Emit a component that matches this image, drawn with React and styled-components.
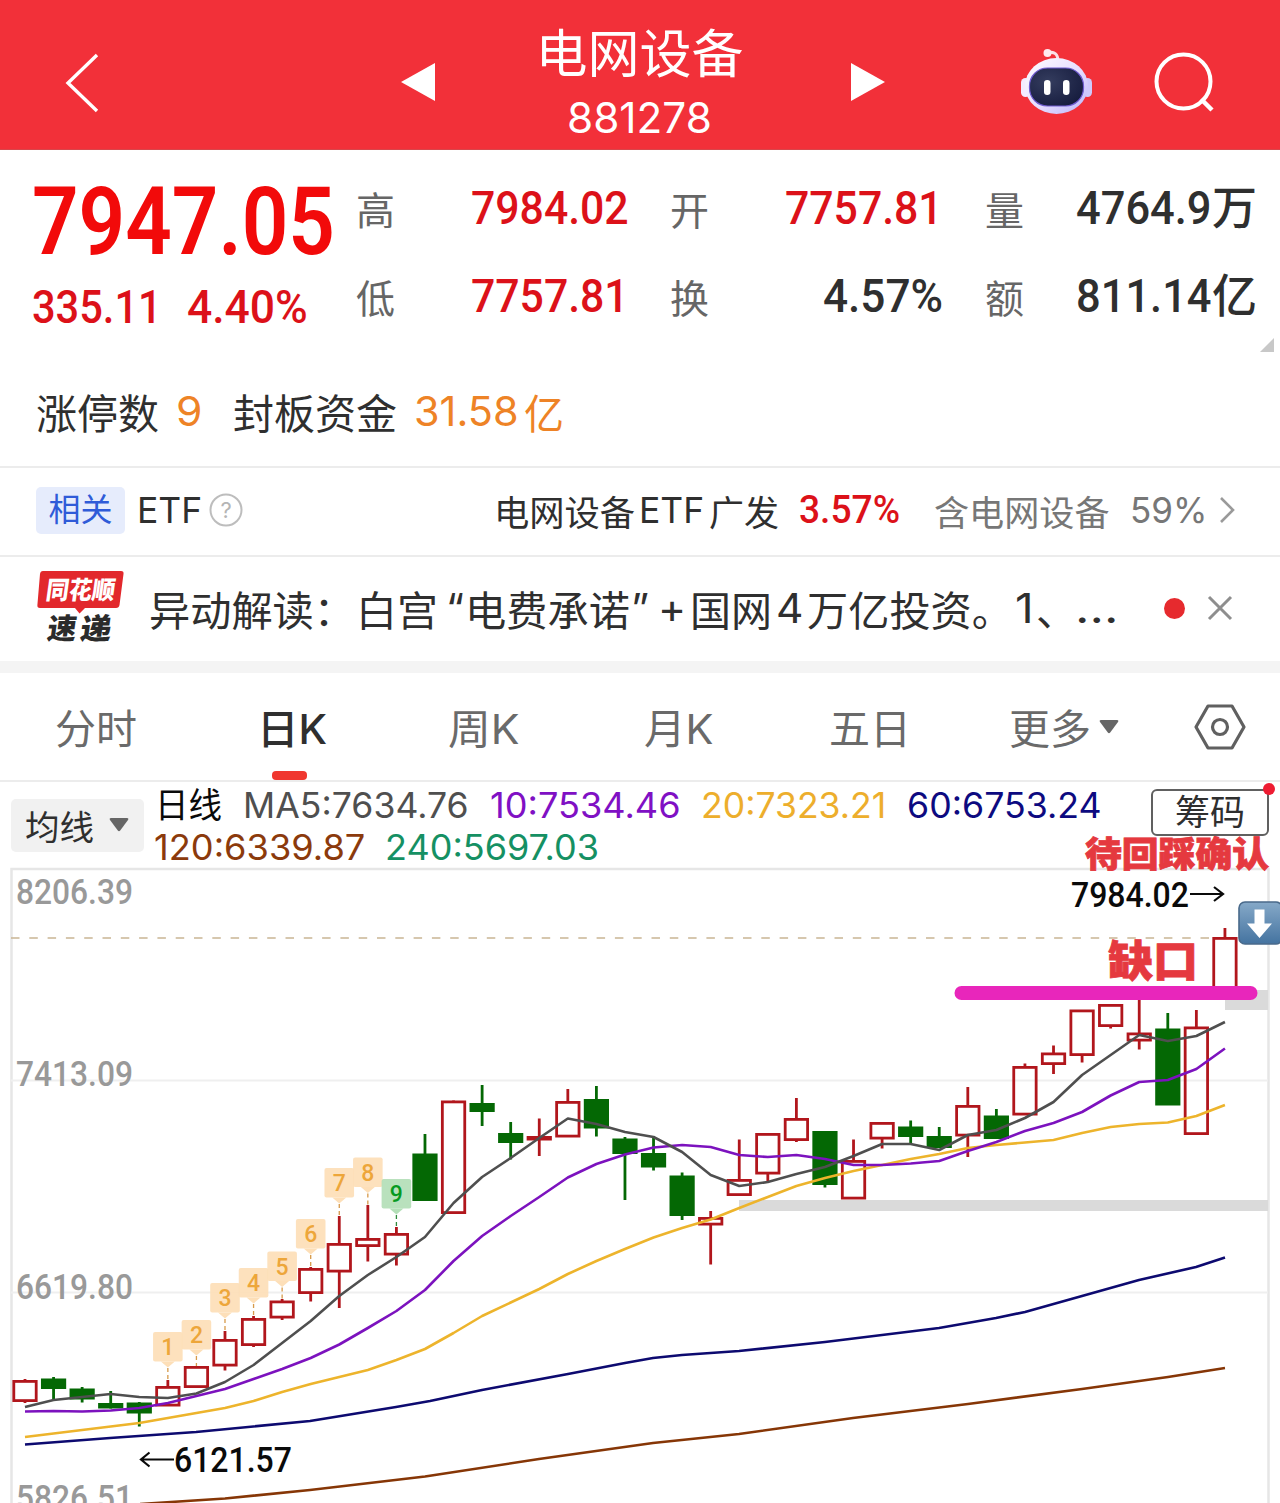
import React, { useLayoutEffect, useRef, useState } from "react";
import styled, { createGlobalStyle } from "styled-components";

const UI = `Inter, "Noto Sans CJK SC", sans-serif`;
const NUM = `Roboto, "Noto Sans CJK SC", sans-serif`;

const GlobalStyle = createGlobalStyle`
  * {
    box-sizing: border-box;
  }
  body {
    margin: 0;
    background: #fff;
    color: #2f2f2f;
    font-family: ${UI};
    overflow: hidden;
  }
`;

/* squeezes or stretches its text to a fixed width */
function FitText({ width, children, ...rest }) {
  const ref = useRef(null);
  const [scale, setScale] = useState(1);

  useLayoutEffect(() => {
    setScale(width / ref.current.offsetWidth);
  }, [width, children]);

  return (
    <FitBox $width={width} {...rest}>
      <span ref={ref} style={{ transform: `scaleX(${scale})` }}>
        {children}
      </span>
    </FitBox>
  );
}

const FitBox = styled.span`
  display: block;
  flex: none;
  width: ${(p) => p.$width}px;
  margin-left: ${(p) => p.$ml || 0}px;
  color: ${(p) => p.$color || "inherit"};
  white-space: pre;
  span {
    display: inline-block;
    transform-origin: left center;
  }
`;

const Screen = styled.div`
  width: 1280px;
  height: 1503px;
  overflow: hidden;
`;

const Header = styled.header`
  height: 150px;
  display: flex;
  align-items: center;
  background: #f23039;
  border-bottom: 1px solid #d8464b;
  color: #fff;
`;

const HeaderTitle = styled.div`
  width: 416px;
  height: 150px;
  padding: 23px 7px 0 0;
  display: flex;
  flex-direction: column;
  align-items: center;
`;

const Name = styled.div`
  font-size: 52px;
  line-height: 64px;
`;

const Code = styled.div`
  font-size: 42px;
  line-height: 62px;
`;

const Icon = styled.svg`
  display: block;
  flex: none;
  margin-left: ${(p) => p.$ml || 0}px;
  margin-top: ${(p) => p.$mt || 0}px;
`;

const Quote = styled.section`
  height: 212px;
  padding: 16px 0 0 32px;
  display: flex;
  position: relative;
`;

const PriceBlock = styled.div`
  width: 324px;
  color: #f20a0a;
  font-family: ${NUM};
  font-weight: 500;
`;

const Price = styled.div`
  font-size: 94px;
  font-weight: 600;
  line-height: 112px;
`;

const Change = styled.div`
  display: flex;
  font-size: 47px;
  line-height: 58px;
  color: #dc1119;
`;

const Stats = styled.div`
  display: grid;
  grid-template-columns: 314px 315px 280px;
  grid-auto-rows: 88px;
`;

const Stat = styled.div`
  display: flex;
  align-items: center;
  justify-content: space-between;
  width: ${(p) => p.$width}px;
  height: 88px;
`;

const StatLabel = styled.span`
  margin-top: 2px;
  font-size: 39px;
  line-height: 60px;
  color: #666;
`;

const StatValue = styled.div`
  display: flex;
  font-family: ${NUM};
  font-weight: 500;
  font-size: 46px;
  line-height: 60px;
  margin-top: -4px;
  color: ${(p) => (p.$up ? "#dc1119" : "#2f2f2f")};
`;

const Corner = styled.svg`
  position: absolute;
  right: 6px;
  top: 188px;
`;

const LimitRow = styled.section`
  height: 104px;
  padding: 0 0 6px 36px;
  display: flex;
  align-items: center;
  font-size: 41px;
`;

const EtfRow = styled.section`
  height: 89px;
  padding: 0 0 3px 36px;
  display: flex;
  align-items: center;
  border-top: 2px solid #ececec;
  font-size: 35.5px;
`;

const Tag = styled.span`
  width: 89px;
  height: 47px;
  border-radius: 5px;
  background: #e6ecfc;
  color: #2f5bd8;
  font-size: 32px;
  line-height: 46px;
  text-align: center;
`;

const Percent = styled.div`
  margin-left: 20px;
  font-family: ${NUM};
  font-weight: 500;
  font-size: 39px;
  color: #dc1119;
`;

const NewsRow = styled.section`
  height: 106px;
  padding: 0 0 2px 36px;
  display: flex;
  align-items: center;
  border-top: 2px solid #ececec;
  font-size: 41px;
`;

const Dot = styled.i`
  width: 21px;
  height: 21px;
  margin-left: ${(p) => p.$ml}px;
  border-radius: 50%;
  background: #e62a2e;
`;

const Divider = styled.div`
  height: 12px;
  background: #f4f4f4;
`;

const Tabs = styled.nav`
  height: 109px;
  display: flex;
  align-items: center;
  border-bottom: 2px solid #ececec;
`;

const Tab = styled.div`
  position: relative;
  height: 107px;
  line-height: 112px;
  margin-left: ${(p) => p.$ml}px;
  font-size: 41px;
  color: ${(p) => (p.$active ? "#2f2f2f" : "#6a6a6a")};
  font-weight: ${(p) => (p.$active ? 500 : 400)};
  &::after {
    content: "";
    display: ${(p) => (p.$active ? "block" : "none")};
    position: absolute;
    left: 15px;
    bottom: 0;
    width: 35px;
    height: 9px;
    border-radius: 4px;
    background: #f0372f;
  }
`;

const Legend = styled.section`
  height: 87px;
  display: flex;
  align-items: flex-start;
  font-size: 35px;
`;

const MaSelect = styled.div`
  width: 133px;
  height: 53px;
  margin: 17px 0 0 11px;
  padding: 0 0 2px 14px;
  display: flex;
  align-items: center;
  border-radius: 5px;
  background: #f1f1f1;
  font-size: 34.5px;
`;

const MaLines = styled.div`
  width: 1007px;
  padding: 2px 0 0 11px;
`;

const MaLine = styled.div`
  display: flex;
  height: 42px;
  line-height: 42px;
`;

const ChipButton = styled.div`
  position: relative;
  width: 118px;
  height: 47px;
  margin-top: 7px;
  border: 2px solid #606060;
  border-radius: 6px;
  font-size: 35px;
  line-height: 42px;
  text-align: center;
  &::after {
    content: "";
    position: absolute;
    right: -8px;
    top: -8px;
    width: 12px;
    height: 12px;
    border-radius: 50%;
    background: #ee1c32;
  }
`;

const ChartSvg = styled.svg`
  display: block;
  overflow: visible;
`;

const RED = "#b1161c";
const GREEN = "#046804";
const STEP = 28.57;
const cx = (i) => 25 + i * STEP;

// [up, body top, body bottom, wick top, wick bottom]
const candles = [
  [1, 1380, 1402, 1379, 1403],
  [0, 1378.5, 1389, 1377, 1399.5],
  [0, 1388.5, 1399.5, 1387, 1402.5],
  [0, 1403, 1408.5, 1391, 1408.5],
  [0, 1402.5, 1413.5, 1402, 1426.5],
  [1, 1386, 1406.5, 1380, 1406],
  [1, 1366, 1388, 1366, 1388],
  [1, 1339, 1366.5, 1331, 1370.5],
  [1, 1318, 1346, 1316, 1347],
  [1, 1300.5, 1318.5, 1299, 1320],
  [1, 1268, 1294, 1267, 1301.5],
  [1, 1243, 1272.5, 1216, 1308],
  [1, 1238, 1247, 1205, 1261.5],
  [1, 1233, 1255.5, 1227, 1265.5],
  [0, 1153.5, 1201, 1134, 1201],
  [1, 1100.5, 1214, 1100.5, 1214],
  [0, 1103, 1112, 1085, 1126],
  [0, 1133, 1143, 1122, 1159.5],
  [1, 1136, 1140.5, 1118.5, 1156],
  [1, 1101, 1137.5, 1089, 1137],
  [0, 1099, 1128.5, 1086, 1136.5],
  [0, 1138.5, 1154, 1137, 1200],
  [0, 1153, 1167.5, 1136, 1170.5],
  [0, 1175.5, 1216, 1172.5, 1220],
  [1, 1217, 1225.5, 1211, 1264.5],
  [1, 1179, 1196, 1139.5, 1196],
  [1, 1133, 1174.5, 1133, 1182.5],
  [1, 1118, 1141, 1098, 1142],
  [0, 1131, 1185, 1131, 1187.5],
  [1, 1160, 1199.5, 1139.5, 1199],
  [1, 1122, 1139.5, 1122, 1148.5],
  [0, 1126.5, 1137, 1120.5, 1143.5],
  [0, 1136, 1148, 1127, 1148],
  [1, 1105, 1136.5, 1087, 1157],
  [0, 1115.5, 1139, 1109, 1139],
  [1, 1066, 1115.5, 1063.5, 1115],
  [1, 1052.5, 1065, 1045.5, 1074],
  [1, 1009.5, 1056, 1010, 1062.5],
  [1, 1004, 1027, 1004, 1028.5],
  [1, 1032.5, 1041.5, 998, 1049.5],
  [0, 1028.5, 1105.5, 1013, 1105],
  [1, 1026.5, 1135, 1010, 1135],
  [1, 937, 994, 928, 994],
];

const ma5 = [
  1407, 1400, 1397, 1394, 1397, 1398, 1393.5, 1382, 1365, 1343, 1321, 1296,
  1275, 1257, 1237, 1203, 1177, 1158, 1138, 1118.5, 1124, 1132, 1137, 1152,
  1175, 1186, 1182, 1174, 1167, 1156, 1144, 1144, 1150, 1135, 1130, 1118, 1102,
  1075, 1055, 1035, 1041, 1036, 1022,
];

const ma10 = [
  1411.5, 1411, 1411.5, 1410.5, 1408, 1403, 1396, 1389, 1379, 1369, 1358,
  1344.5, 1328, 1311, 1290, 1261, 1236, 1216, 1197, 1177.5, 1164, 1154.5, 1147.5,
  1145, 1147, 1155, 1157, 1155, 1159, 1165, 1165, 1163.5, 1161, 1151, 1142,
  1131, 1123, 1112, 1095.5, 1082, 1080, 1069, 1048.5,
];

const ma20 = [
  1437, 1433.5, 1430, 1426.5, 1423, 1418, 1413, 1408, 1401, 1392, 1384, 1377,
  1370, 1360, 1349, 1333, 1316, 1302.5, 1289, 1274, 1261, 1249, 1237.5, 1228,
  1219.5, 1208, 1197, 1186, 1178, 1171, 1165, 1159, 1154, 1148, 1145, 1142.5,
  1140, 1133, 1127, 1124, 1122.5, 1116, 1105,
];

const ma60 =
  "25,1444.5 110,1438 196,1432 310,1421 396,1407 430,1401 482,1390 568,1374 625,1363 653,1358 682,1355 739,1351 825,1342 939,1328 996,1318 1025,1312 1082,1296 1139,1280 1196,1267 1225,1257.5";
const ma120 =
  "140,1504 225,1498.5 310,1490 425,1476.5 539,1459 653,1443 739,1434 853,1418 968,1404 1082,1389 1168,1377 1225,1368";

// [candle index, badge top]
const badges = [
  [5, 1332],
  [6, 1320],
  [7, 1283],
  [8, 1268],
  [9, 1251.5],
  [10, 1219],
  [11, 1168],
  [12, 1157.5],
  [13, 1179],
];

const axis = [
  ["8206.39", 903.5],
  ["7413.09", 1086],
  ["6619.80", 1298.5],
  ["5826.51", 1510],
];

const toPoints = (ys) => ys.map((y, i) => `${cx(i)},${y}`).join(" ");

function Candle({ index, data }) {
  const [up, top, bottom, high, low] = data;
  const x = cx(index);
  const color = up ? RED : GREEN;
  return (
    <g stroke={color} strokeWidth="2.8">
      <path d={`M${x} ${high}V${top + 1}M${x} ${bottom - 1}V${low}`} />
      {up ? (
        <rect
          x={x - 11.2}
          y={top + 1.4}
          width="22.4"
          height={bottom - top - 2.8}
          fill="none"
        />
      ) : (
        <rect x={x - 12.6} y={top} width="25.2" height={bottom - top} fill={GREEN} stroke="none" />
      )}
    </g>
  );
}

function Badge({ index, top, label }) {
  const x = cx(index);
  const last = label === 9;
  const bg = last ? "#b4dfb8" : "#fddfb8";
  const fg = last ? "#079a22" : "#eda63a";
  return (
    <g>
      <path
        d={`M${x} ${top + 36}V${candles[index][3]}`}
        stroke={last ? "#2f8a3c" : "#d69a4a"}
        strokeWidth="1.3"
        strokeDasharray="4 3"
      />
      <rect x={x - 14.8} y={top} width="29.6" height="29.5" rx="2" fill={bg} opacity="0.93" />
      <path d={`M${x - 7} ${top + 29.5}h14l-7 6z`} fill={bg} />
      <text
        x={x}
        y={top + 23}
        textAnchor="middle"
        fontFamily="Roboto"
        fontWeight="500"
        fontSize="23"
        fill={fg}
      >
        {label}
      </text>
    </g>
  );
}

function Chart() {
  return (
    <ChartSvg width="1280" height="634" viewBox="0 869 1280 634" fill="none">
      <g stroke="#e6e6e6" strokeWidth="2">
        <path d="M11.5 1503V869H1268.5V1503" strokeWidth="2.5" />
        <path d="M11 1080.5H1268M11 1292.5H1268" stroke="#efefef" />
      </g>
      <path d="M739 1205.5H1268" stroke="#dadada" strokeWidth="11" />
      <path d="M1225 1000H1268" stroke="#dadada" strokeWidth="20" />
      <path d="M11 938H1213" stroke="#c9b594" strokeWidth="1.6" strokeDasharray="8.5 9.8" />

      <g fontFamily="Roboto" fontSize="35" fontWeight="500" fill="#999">
        {axis.map(([label, y]) => (
          <text key={label} x="16" y={y} textLength="117" lengthAdjust="spacingAndGlyphs">
            {label}
          </text>
        ))}
      </g>

      {badges.map(([i, top], n) => (
        <Badge key={i} index={i} top={top} label={n + 1} />
      ))}
      {candles.map((c, i) => (
        <Candle key={i} index={i} data={c} />
      ))}

      <g strokeWidth="2.6" strokeLinejoin="round">
        <polyline points={ma120} stroke="#863606" />
        <polyline points={ma60} stroke="#0d0a70" />
        <polyline points={toPoints(ma20)} stroke="#edb42c" />
        <polyline points={toPoints(ma10)} stroke="#7c12be" />
        <polyline points={toPoints(ma5)} stroke="#4f4f4f" />
      </g>

      <g fontFamily="Roboto" fontSize="35" fontWeight="500" fill="#0a0a0a">
        <text x="1071" y="907" textLength="118" lengthAdjust="spacingAndGlyphs">
          7984.02
        </text>
        <text x="174" y="1472" textLength="118" lengthAdjust="spacingAndGlyphs">
          6121.57
        </text>
      </g>
      <g stroke="#0a0a0a" strokeWidth="2.2">
        <path d="M1190 894H1223M1214 887L1223 894L1214 901" />
        <path d="M174 1459.5H141M149.5 1452.5L141 1459.5L149.5 1466.5" />
      </g>

      <path d="M961.5 993H1250.5" stroke="#e826bb" strokeWidth="14" strokeLinecap="round" />
      <g
        fontFamily="Noto Sans CJK SC"
        fontWeight="900"
        fill="#e5393f"
        stroke="#e5393f"
        strokeWidth="0.8"
      >
        <text x="1085" y="867" fontSize="35" textLength="184" lengthAdjust="spacingAndGlyphs">
          待回踩确认
        </text>
        <text x="1108" y="977" fontSize="43" textLength="90" lengthAdjust="spacingAndGlyphs">
          缺口
        </text>
      </g>

      <defs>
        <linearGradient id="arrow-bg" x1="0" y1="0" x2="0" y2="1">
          <stop offset="0" stopColor="#86a9c8" />
          <stop offset="1" stopColor="#4473a0" />
        </linearGradient>
      </defs>
      <rect x="1239" y="902" width="43" height="42" rx="6" fill="url(#arrow-bg)" stroke="#496a8b" strokeWidth="1.6" />
      <path d="M1254.5 909.5h10v14h7.5l-12.5 14.5l-12.5-14.5h7.5z" fill="#fff" />
    </ChartSvg>
  );
}

function Robot() {
  return (
    <Icon width="74" height="68" viewBox="0 0 74 68" $ml={135} $mt={13}>
      <defs>
        <linearGradient id="shell" x1="0" y1="0" x2="1" y2="1">
          <stop offset="0" stopColor="#fff" />
          <stop offset="0.55" stopColor="#e6dcff" />
          <stop offset="1" stopColor="#b9b5fa" />
        </linearGradient>
        <radialGradient id="visor" cx="0.35" cy="0.35" r="0.8">
          <stop offset="0" stopColor="#343c5e" />
          <stop offset="1" stopColor="#141a3c" />
        </radialGradient>
      </defs>
      <path d="M28 6C34 4 38 7 38 14" fill="none" stroke="#fbdfe6" strokeWidth="3" />
      <circle cx="27.5" cy="6" r="4" fill="#ffe9ee" />
      <rect x="1" y="31" width="9" height="19" rx="4.5" fill="#f4eaff" />
      <rect x="63" y="31" width="9" height="19" rx="4.5" fill="#cfc9fb" />
      <ellipse cx="36.5" cy="39" rx="31.5" ry="28" fill="url(#shell)" />
      <rect x="9.5" y="21" width="54" height="38" rx="18" fill="url(#visor)" stroke="#6f5bd0" strokeWidth="1.2" />
      <rect x="24" y="33" width="6.5" height="15" rx="3.2" fill="#fff" />
      <rect x="43" y="33" width="6.5" height="15" rx="3.2" fill="#fff" />
    </Icon>
  );
}

function NewsLogo() {
  return (
    <Icon width="90" height="76" viewBox="0 0 90 76" $ml={0}>
      <path
        d="M7 1H85Q88 1 87.500 4L83.500 35Q83 38 80 38H49L43.500 43.500L39 38H4Q1 38 1.400 35L4 4Q4.400 1 7 1Z"
        fill="#e2282c"
      />
      <g fontFamily="Noto Sans CJK SC" fontWeight="900" transform="skewX(-8)">
        <text x="13" y="29" fontSize="25" fill="#fff" textLength="69" lengthAdjust="spacingAndGlyphs">
          同花顺
        </text>
        <text x="20" y="69" fontSize="29" fill="#2b2b2b" textLength="29" lengthAdjust="spacingAndGlyphs">
          速
        </text>
        <text x="53" y="69" fontSize="29" fill="#2b2b2b" textLength="31" lengthAdjust="spacingAndGlyphs">
          递
        </text>
      </g>
    </Icon>
  );
}

function Triangle({ ml, color = "#666" }) {
  return (
    <Icon width="20" height="14" viewBox="0 0 20 14" $ml={ml}>
      <path d="M2 0H18Q20 0 19 2L11.200 12.500Q10 14 8.800 12.500L1 2Q0 0 2 0Z" fill={color} />
    </Icon>
  );
}

function App() {
  return (
    <Screen>
      <GlobalStyle />
      <Header>
        <Icon width="36" height="62" viewBox="0 0 36 62" $ml={64} $mt={17}>
          <path d="M33 3L4 31L33 59" fill="none" stroke="#fff" strokeWidth="3.4" />
        </Icon>
        <Icon width="34" height="38" viewBox="0 0 34 38" $ml={301} $mt={14}>
          <path d="M0 19L34 0V38Z" fill="#fff" />
        </Icon>
        <HeaderTitle>
          <Name>
            <FitText width={208}>电网设备</FitText>
          </Name>
          <Code>
            <FitText width={145}>881278</FitText>
          </Code>
        </HeaderTitle>
        <Icon width="34" height="38" viewBox="0 0 34 38" $ml={0} $mt={14}>
          <path d="M34 19L0 0V38Z" fill="#fff" />
        </Icon>
        <Robot />
        <Icon width="62" height="62" viewBox="0 0 62 62" $ml={59} $mt={16}>
          <g fill="none" stroke="#fff" strokeWidth="4">
            <circle cx="30.500" cy="29.500" r="27" />
            <path d="M48 47L59 58" strokeWidth="4.500" />
          </g>
        </Icon>
      </Header>

      <Quote>
        <PriceBlock>
          <Price>
            <FitText width={303}>7947.05</FitText>
          </Price>
          <Change>
            <FitText width={130}>335.11</FitText>
            <FitText width={121} $ml={25}>4.40%</FitText>
          </Change>
        </PriceBlock>
        <Stats>
          <Stat $width={273}>
            <StatLabel>高</StatLabel>
            <StatValue $up>
              <FitText width={158}>7984.02</FitText>
            </StatValue>
          </Stat>
          <Stat $width={273}>
            <StatLabel>开</StatLabel>
            <StatValue $up>
              <FitText width={158}>7757.81</FitText>
            </StatValue>
          </Stat>
          <Stat $width={272}>
            <StatLabel>量</StatLabel>
            <StatValue>
              <FitText width={136}>4764.9</FitText>
              <FitText width={45}>万</FitText>
            </StatValue>
          </Stat>
          <Stat $width={273}>
            <StatLabel>低</StatLabel>
            <StatValue $up>
              <FitText width={158}>7757.81</FitText>
            </StatValue>
          </Stat>
          <Stat $width={273}>
            <StatLabel>换</StatLabel>
            <StatValue>
              <FitText width={120}>4.57%</FitText>
            </StatValue>
          </Stat>
          <Stat $width={272}>
            <StatLabel>额</StatLabel>
            <StatValue>
              <FitText width={136}>811.14</FitText>
              <FitText width={45}>亿</FitText>
            </StatValue>
          </Stat>
        </Stats>
        <Corner width="14" height="14" viewBox="0 0 14 14">
          <path d="M14 0V14H0Z" fill="#c8c8c8" />
        </Corner>
      </Quote>

      <LimitRow>
        <FitText width={123}>涨停数</FitText>
        <FitText width={26} $ml={17} $color="#ee8326">9</FitText>
        <FitText width={164} $ml={31}>封板资金</FitText>
        <FitText width={105} $ml={17} $color="#ee8326">31.58</FitText>
        <FitText width={40} $ml={5} $color="#ee8326">亿</FitText>
      </LimitRow>

      <EtfRow>
        <Tag>相关</Tag>
        <FitText width={65} $ml={12}>ETF</FitText>
        <Icon width="34" height="34" viewBox="0 0 34 34" $ml={7}>
          <circle cx="17" cy="17" r="15.500" fill="none" stroke="#bdbdbd" strokeWidth="2" />
          <text x="17" y="25" textAnchor="middle" fontFamily="Inter" fontSize="22" fill="#b5b5b5">
            ?
          </text>
        </Icon>
        <FitText width={141} $ml={251}>电网设备</FitText>
        <FitText width={65} $ml={4}>ETF</FitText>
        <FitText width={70} $ml={5}>广发</FitText>
        <Percent>
          <FitText width={101}>3.57%</FitText>
        </Percent>
        <FitText width={176} $ml={34} $color="#777">含电网设备</FitText>
        <FitText width={77} $ml={20} $color="#777">59%</FitText>
        <Icon width="18" height="30" viewBox="0 0 18 30" $ml={11}>
          <path d="M3 3L15 15L3 27" fill="none" stroke="#9a9a9a" strokeWidth="2.600" />
        </Icon>
      </EtfRow>

      <NewsRow>
        <NewsLogo />
        <FitText width={206} $ml={23}>异动解读：</FitText>
        <FitText width={82} $ml={1}>白宫</FitText>
        <FitText width={18} $ml={8}>“</FitText>
        <FitText width={165} $ml={1}>电费承诺</FitText>
        <FitText width={18} $ml={1}>”</FitText>
        <FitText width={28} $ml={9}>+</FitText>
        <FitText width={82} $ml={4}>国网</FitText>
        <FitText width={28} $ml={4}>4</FitText>
        <FitText width={206} $ml={3}>万亿投资。</FitText>
        <FitText width={19} $ml={2}>1</FitText>
        <FitText width={41} $ml={2}>、</FitText>
        <FitText width={43} $ml={-2}>...</FitText>
        <Dot $ml={46} />
        <Icon width="26" height="26" viewBox="0 0 26 26" $ml={22}>
          <path d="M2 2L24 24M24 2L2 24" stroke="#8e8e8e" strokeWidth="3" />
        </Icon>
      </NewsRow>

      <Divider />

      <Tabs>
        <Tab $ml={55}>
          <FitText width={82}>分时</FitText>
        </Tab>
        <Tab $ml={120} $active>
          <FitText width={70}>日K</FitText>
        </Tab>
        <Tab $ml={121}>
          <FitText width={72}>周K</FitText>
        </Tab>
        <Tab $ml={124}>
          <FitText width={70}>月K</FitText>
        </Tab>
        <Tab $ml={115}>
          <FitText width={82}>五日</FitText>
        </Tab>
        <Tab $ml={98}>
          <FitText width={82}>更多</FitText>
        </Tab>
        <Triangle ml={8} />
        <Icon width="52" height="46" viewBox="0 0 52 46" $ml={75}>
          <g fill="none" stroke="#606060" strokeWidth="3.200" strokeLinejoin="round">
            <path d="M14 2H38L50 23L38 44H14L2 23Z" />
            <circle cx="26" cy="23" r="7.500" />
          </g>
        </Icon>
      </Tabs>

      <Legend>
        <MaSelect>
          <FitText width={69}>均线</FitText>
          <Triangle ml={15} />
        </MaSelect>
        <MaLines>
          <MaLine>
            <FitText width={67} $color="#0a0a0a">日线</FitText>
            <FitText width={226} $ml={21} $color="#4f4f4f">MA5:7634.76</FitText>
            <FitText width={191} $ml={21} $color="#8010c4">10:7534.46</FitText>
            <FitText width={185} $ml={20} $color="#edae2c">20:7323.21</FitText>
            <FitText width={195} $ml={21} $color="#0d0a80">60:6753.24</FitText>
          </MaLine>
          <MaLine>
            <FitText width={211} $ml={-1} $color="#8b3a0c">120:6339.87</FitText>
            <FitText width={214} $ml={20} $color="#159063">240:5697.03</FitText>
          </MaLine>
        </MaLines>
        <ChipButton>筹码</ChipButton>
      </Legend>

      <Chart />
    </Screen>
  );
}

export default App;
